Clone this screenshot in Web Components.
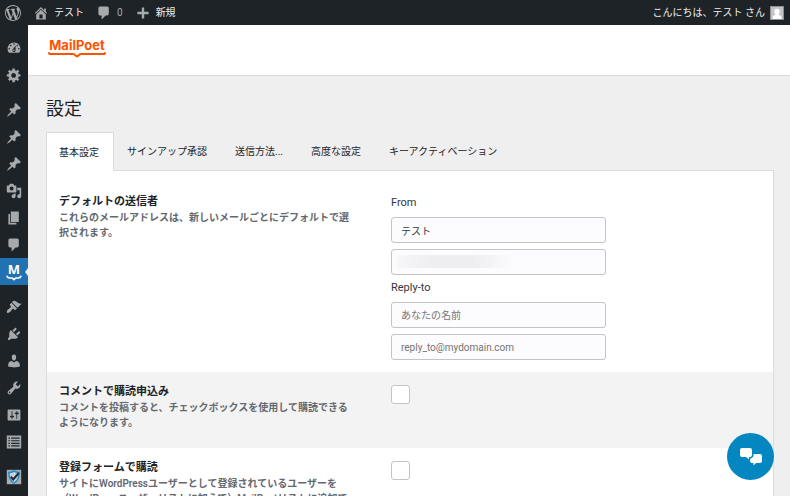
<!DOCTYPE html>
<html lang="ja">
<head>
<meta charset="utf-8">
<title>設定 - MailPoet</title>
<style>
  body {
    margin: 0;
    font-family: Roboto, "Noto Sans CJK JP", sans-serif;
    font-size: 10px;
    line-height: 15px;
    color: #1d2327;
  }
</style>
</head>
<body>
<settings-app></settings-app>

<script>
const ICONS = {
  wordpress: '<path d="M20 10c0-5.51-4.49-10-10-10C4.48 0 0 4.49 0 10c0 5.52 4.48 10 10 10 5.51 0 10-4.48 10-10zM7.78 15.37L4.37 6.22c.55-.02 1.17-.08 1.17-.08.5-.06.44-1.13-.06-1.11 0 0-1.45.11-2.37.11-.18 0-.37 0-.58-.01C4.12 2.69 6.87 1.11 10 1.11c2.33 0 4.45.87 6.05 2.34-.68-.11-1.65.39-1.65 1.58 0 .74.45 1.36.9 2.1.35.61.55 1.36.55 2.46 0 1.49-1.4 5-1.4 5l-3.03-8.37c.54-.02.82-.17.82-.17.5-.05.44-1.25-.06-1.22 0 0-1.44.12-2.38.12-.87 0-2.33-.12-2.33-.12-.5-.03-.56 1.2-.06 1.22l.92.08 1.26 3.41zM17.41 10c.24-.64.74-1.87.43-4.25.7 1.29 1.05 2.71 1.05 4.25 0 3.29-1.73 6.24-4.4 7.78.97-2.59 1.94-5.2 2.92-7.78zM6.1 18.09C3.12 16.65 1.11 13.53 1.11 10c0-1.3.23-2.48.72-3.59C3.25 10.3 4.67 14.2 6.1 18.09zm4.03-6.63l2.58 6.98c-.86.29-1.76.45-2.71.45-.79 0-1.57-.11-2.29-.33.81-2.38 1.62-4.74 2.42-7.1z"/>',
  home: '<path d="M16 8.5l1.53 1.53-1.06 1.06L10 4.6l-6.47 6.49-1.06-1.06L10 2.5l4 4v-2h2v4zm-6-2.46l6 5.99V18H4v-5.97zM12 17v-5H8v5h4z"/>',
  comments: '<path d="M5 2h9c1.1 0 2 .9 2 2v7c0 1.1-.9 2-2 2h-2l-5 5v-5H5c-1.1 0-2-.9-2-2V4c0-1.1.9-2 2-2z"/>',
  plus: '<path d="M17 8.5v3h-5.5V17h-3v-5.500H3v-3h5.500V3h3v5.500z"/>',
  dashboard: '<path fill-rule="evenodd" d="M3.76 16h12.48c1.1-1.37 1.76-3.11 1.76-5 0-4.42-3.58-8-8-8s-8 3.58-8 8c0 1.89.66 3.63 1.76 5zM10 4c.55 0 1 .45 1 1s-.45 1-1 1-1-.45-1-1 .45-1 1-1zM6 6c.55 0 1 .45 1 1s-.45 1-1 1-1-.45-1-1 .45-1 1-1zm8 0c.55 0 1 .45 1 1s-.45 1-1 1-1-.45-1-1 .45-1 1-1zm-5.370 5.550L12 7v6c0 1.100-.9 2-2 2s-2-.9-2-2c0-.57.24-1.080.63-1.450zM4 10c.55 0 1 .45 1 1s-.45 1-1 1-1-.45-1-1 .45-1 1-1zm12 0c.55 0 1 .45 1 1s-.45 1-1 1-1-.45-1-1 .45-1 1-1zm-5 3c0-.55-.45-1-1-1s-1 .45-1 1 .45 1 1 1 1-.45 1-1z"/>',
  gear: '<path fill-rule="evenodd" d="M18 12h-2.180c-.17.7-.44 1.350-.81 1.930l1.540 1.540-2.100 2.100-1.540-1.540c-.58.36-1.230.63-1.910.79V19H8v-2.180c-.68-.16-1.330-.43-1.910-.79l-1.540 1.540-2.120-2.120 1.540-1.540c-.36-.58-.63-1.230-.79-1.910H1V9.030h2.170c.16-.7.44-1.350.8-1.940L2.430 5.550l2.100-2.100 1.540 1.540c.58-.37 1.240-.64 1.930-.81V2h3v2.180c.68.16 1.330.43 1.910.79l1.540-1.540 2.120 2.120-1.540 1.540c.36.59.64 1.240.8 1.940H18V12zm-8.500 1.500c1.660 0 3-1.340 3-3s-1.340-3-3-3-3 1.340-3 3 1.340 3 3 3z"/>',
  pin: '<path d="M10.440 3.020l1.820-1.820 6.360 6.350-1.830 1.820c-1.050-.68-2.480-.57-3.410.36l-.75.75c-.92.93-1.040 2.350-.35 3.410l-1.830 1.820-2.410-2.410-2.800 2.790c-.42.42-3.380 2.710-3.800 2.290s1.860-3.390 2.280-3.810l2.790-2.790L4.100 9.360l1.830-1.820c1.050.69 2.480.57 3.400-.36l.75-.75c.93-.92 1.050-2.350.36-3.410z"/>',
  media: '<path fill-rule="evenodd" d="M13 11V4c0-.55-.45-1-1-1h-1.670L9 1H5L3.670 3H2c-.55 0-1 .45-1 1v7c0 .55.45 1 1 1h10c.55 0 1-.45 1-1zM7 4.500c1.380 0 2.500 1.120 2.500 2.500S8.380 9.500 7 9.500 4.500 8.380 4.500 7 5.620 4.500 7 4.500z"/><path d="M14 6h5v10.500c0 1.380-1.120 2.500-2.500 2.500S14 17.880 14 16.500s1.120-2.500 2.500-2.500c.17 0 .34.02.5.05V9h-3V6zm-4 8.050V13h2v3.500c0 1.380-1.120 2.500-2.500 2.500S7 17.880 7 16.500 8.120 14 9.500 14c.17 0 .34.02.5.05z"/>',
  page: '<path d="M6 15V2h10v13H6zm-1 1h8v2H3V5h2v11z"/>',
  brush: '<path d="M14.480 11.060L7.410 3.990l1.500-1.500c.5-.56 2.300-.47 3.510.32 1.210.8 1.430 1.280 2.910 2.100 1.180.64 2.450 1.260 4.450.85zm-.71.71L6.700 4.700 4.930 6.470c-.39.39-.39 1.020 0 1.410l1.060 1.060c.39.39.39 1.030 0 1.420-.6.6-1.430 1.110-2.210 1.690-.35.26-.7.53-1.010.84C1.430 14.230.4 16.080 1.400 17.070c.99 1 2.840-.03 4.180-1.360.31-.31.58-.66.85-1.020.57-.78 1.080-1.610 1.690-2.210.39-.39 1.020-.39 1.410 0l1.060 1.060c.39.39 1.020.39 1.410 0z"/>',
  plug: '<path d="M13.110 4.360L9.870 7.600 8 5.730l3.240-3.240c.35-.34 1.050-.2 1.560.32.52.51.66 1.210.31 1.550zm-8 1.770l.91-1.120 9.010 9.010-1.190.84c-.71.71-2.630 1.160-3.820 1.160H6.140L4.900 17.260c-.59.59-1.540.59-2.120 0-.59-.58-.59-1.530 0-2.120l1.240-1.240v-3.880c0-1.130.4-3.190 1.090-3.890zm7.260 3.970l3.240-3.240c.34-.35 1.040-.21 1.550.31.52.51.66 1.210.31 1.550l-3.240 3.250z"/>',
  user: '<path d="M10 9.250c-2.270 0-2.730-3.440-2.730-3.440C7 4.020 7.820 2 9.970 2c2.160 0 2.980 2.020 2.710 3.810 0 0-.41 3.440-2.680 3.440zm0 2.570L12.720 10c2.390 0 4.520 2.330 4.520 4.530v2.490s-3.650 1.130-7.240 1.130c-3.650 0-7.240-1.130-7.240-1.130v-2.490c0-2.250 1.940-4.480 4.470-4.480z"/>',
  wrench: '<path fill-rule="evenodd" d="M16.680 9.770c-1.340 1.340-3.300 1.670-4.950.99l-5.410 6.520c-.99.99-2.590.99-3.580 0s-.99-2.590 0-3.570l6.520-5.420c-.68-1.650-.35-3.610.99-4.950 1.280-1.280 3.120-1.620 4.720-1.060l-2.890 2.890 2.820 2.820 2.860-2.870c.53 1.580.18 3.390-1.080 4.650zM3.810 16.210c.4.39 1.040.39 1.430 0 .4-.4.4-1.040 0-1.430-.39-.4-1.030-.4-1.430 0-.39.39-.39 1.030 0 1.430z"/>',
  sliders: '<path fill-rule="evenodd" d="M18 16V4c0-.55-.45-1-1-1H3c-.55 0-1 .45-1 1v12c0 .55.45 1 1 1h14c.55 0 1-.45 1-1zM8 11h1c.55 0 1 .45 1 1s-.45 1-1 1H8v1.500c0 .28-.22.5-.5.5s-.5-.22-.5-.5V13H6c-.55 0-1-.45-1-1s.45-1 1-1h1V5.500c0-.28.22-.5.5-.5s.5.22.5.5V11zm5-2h-1c-.55 0-1-.45-1-1s.45-1 1-1h1V5.500c0-.28.22-.5.5-.5s.5.22.5.5V7h1c.55 0 1 .45 1 1s-.45 1-1 1h-1v5.500c0 .28-.22.5-.5.5s-.5-.22-.5-.5V9z"/>',
  list: '<path fill-rule="evenodd" d="M1 2h18v16H1zM3 4.500V6h2V4.500zM6.500 4.500V6H17V4.500zM3 7.700v1.500h2V7.700zM6.500 7.700v1.500H17V7.700zM3 11v1.500h2V11zM6.500 11v1.500H17V11zM3 14.200v1.500h2v-1.500zM6.500 14.200v1.500H17v-1.500z"/>',
  shield: '<path fill="#a9adb0" d="M1 1h18v18H1z"/><path fill="#c3d3df" stroke="#2d8ccb" stroke-width="2" d="M10 2.500c2 1.300 4 1.900 6.500 2 0 5.500-1 10-6.500 13.200-5.500-3.200-6.500-7.700-6.500-13.200 2.500-.1 4.500-.7 6.500-2z"/><path fill="none" stroke="#23282d" stroke-width="2.500" d="M6 9.500l3 3.500 7-8"/>',
  disc: '<circle cx="10" cy="10" r="8" fill="#b9a7a0"/>',
  brace: '<path fill="none" stroke="currentColor" stroke-width="2" stroke-linecap="round" stroke-linejoin="round" d="M1 1.500c1 2 2 2 3.500 2h2.500L9 5.500 11 3.500h2.500c1.500 0 2.500 0 3.500-2"/>',
  person: '<path fill="#c3c4c7" d="M0 0h20v20H0z"/><path fill="#fff" d="M10 3c2.800 0 4.500 2 4.500 4.500S13 12 12.500 12.700c2.500.8 5 2.300 5 5.800v1.500h-15v-1.500c0-3.500 2.500-5 5-5.800C7 12 5.500 10 5.500 7.500S7.200 3 10 3z"/>'
};

class WpIcon extends HTMLElement {
  constructor() {
    super();
    this.attachShadow({ mode: 'open' });
  }

  connectedCallback() {
    this.shadowRoot.innerHTML = `
      <style>
        :host {
          display: block;
          flex: none;
          width: 16px;
          height: 16px;
        }
        svg {
          display: block;
          width: 100%;
          height: 100%;
          fill: currentColor;
        }
      </style>
      <svg viewBox="${this.getAttribute('box') || '0 0 20 20'}" aria-hidden="true">${ICONS[this.getAttribute('name')]}</svg>
    `;
  }
}

class AdminBar extends HTMLElement {
  constructor() {
    super();
    this.attachShadow({ mode: 'open' }).innerHTML = `
      <style>
        :host {
          display: flex;
          align-items: center;
          justify-content: space-between;
          height: 25px;
          padding: 0 6px 0 5px;
          background: #1d2327;
          color: #f0f0f1;
        }
        nav {
          display: flex;
          align-items: center;
          gap: 12px;
        }
        a {
          display: flex;
          align-items: center;
          gap: 5px;
          color: inherit;
          text-decoration: none;
        }
        wp-icon {
          color: #a7aaad;
        }
        .count {
          color: #a7aaad;
        }
        .me wp-icon {
          border: 1px solid #8c8f94;
          width: 12px;
          height: 12px;
        }
      </style>
      <nav>
        <a href="#" aria-label="WordPress"><wp-icon name="wordpress"></wp-icon></a>
        <a href="#"><wp-icon name="home"></wp-icon>テスト</a>
        <a href="#" class="count"><wp-icon name="comments"></wp-icon>0</a>
        <a href="#"><wp-icon name="plus"></wp-icon>新規</a>
      </nav>
      <a href="#" class="me">こんにちは、テスト さん<wp-icon name="person"></wp-icon></a>
    `;
  }
}

class MenuItem extends HTMLElement {
  constructor() {
    super();
    this.attachShadow({ mode: 'open' }).innerHTML = `
      <style>
        :host {
          display: block;
          height: 27px;
          flex: none;
        }
        a {
          position: relative;
          display: flex;
          flex-direction: column;
          align-items: center;
          justify-content: center;
          height: 100%;
          color: #a7aaad;
          text-decoration: none;
        }
        :host([current]) a {
          background: #2271b1;
          color: #fff;
        }
        /* notch that points at the page */
        :host([current]) a::after {
          content: "";
          position: absolute;
          right: 0;
          border: 4px solid transparent;
          border-left-width: 0;
          border-right-width: 3px;
          border-right-color: #f0f0f1;
        }
      </style>
      <a href="#"><slot></slot></a>
    `;
  }

  connectedCallback() {
    this.shadowRoot.querySelector('a').setAttribute('aria-label', this.getAttribute('label'));
  }
}

class AdminMenu extends HTMLElement {
  constructor() {
    super();
    const item = (name, label) =>
      `<menu-item label="${label}"><wp-icon name="${name}"></wp-icon></menu-item>`;

    this.attachShadow({ mode: 'open' }).innerHTML = `
      <style>
        :host {
          display: block;
          background: #1d2327;
          overflow: hidden;
        }
        nav {
          display: flex;
          flex-direction: column;
          gap: 8px;
          padding-top: 9px;
        }
        .letter {
          font: 700 13px/12px "Open Sans", sans-serif;
        }
        .brace {
          width: 16px;
          height: 6px;
        }
      </style>
      <nav>
        <div>
          ${item('dashboard', 'ダッシュボード')}
          ${item('gear', '一般')}
        </div>
        <div>
          ${item('pin', '投稿')}
          ${item('pin', 'お知らせ')}
          ${item('pin', '事例')}
          ${item('media', 'メディア')}
          ${item('page', '固定ページ')}
          ${item('comments', 'コメント')}
          <menu-item label="MailPoet" current>
            <span class="letter">M</span>
            <wp-icon class="brace" name="brace" box="0 0 18 7"></wp-icon>
          </menu-item>
        </div>
        <div>
          ${item('brush', '外観')}
          ${item('plug', 'プラグイン')}
          ${item('user', 'ユーザー')}
          ${item('wrench', 'ツール')}
          ${item('sliders', '設定')}
          ${item('list', 'フィールド')}
        </div>
        <div>
          ${item('shield', 'セキュリティ')}
          ${item('disc', 'その他')}
        </div>
      </nav>
    `;
  }
}

class BrandHeader extends HTMLElement {
  constructor() {
    super();
    this.attachShadow({ mode: 'open' }).innerHTML = `
      <style>
        :host {
          display: flex;
          align-items: center;
          box-sizing: border-box;
          height: 51px;
          padding: 0 20px 4px;
          background: #fff;
          border-bottom: 1px solid #dcdcde;
        }
        a {
          display: flex;
          flex-direction: column;
          align-items: center;
          color: #fe5301;
          font: 700 13px/14px Inter, sans-serif;
          text-decoration: none;
        }
        svg {
          display: block;
          width: 58px;
          height: 6px;
        }
      </style>
      <a href="#">
        MailPoet
        <svg viewBox="0 0 58 6" aria-hidden="true">
          <path d="M1 1q0 1 2 1h22q1 0 2 1l2 1.500 2-1.500q1-1 2-1h22q2 0 2-1" fill="none" stroke="currentColor" stroke-width="2" stroke-linecap="round"/>
        </svg>
      </a>
    `;
  }
}

class TabBar extends HTMLElement {
  constructor() {
    super();
    this.attachShadow({ mode: 'open' }).innerHTML = `
      <style>
        :host {
          display: flex;
        }
        ::slotted(button) {
          height: 38px;
          margin: 0;
          padding: 0 14px 0 12px;
          border: 1px solid transparent;
          border-bottom: 0;
          background: none;
          color: #1d2327;
          font: inherit;
          white-space: nowrap;
        }
        /* the open tab covers the top line of the panel */
        ::slotted(button[aria-selected="true"]) {
          margin-bottom: -1px;
          height: 39px;
          border-color: #dcdcde;
          background: #fff;
        }
      </style>
      <slot></slot>
    `;
    this.setAttribute('role', 'tablist');
  }
}

class SettingRow extends HTMLElement {
  constructor() {
    super();
    this.attachShadow({ mode: 'open' }).innerHTML = `
      <style>
        :host {
          display: grid;
          grid-template-columns: minmax(0, 298px) minmax(0, 1fr);
          column-gap: 34px;
          padding: 12px 12px 18px;
        }
        :host([shaded]) {
          background: #f3f3f3;
        }
        :host([first]) {
          padding-top: 23px;
          padding-bottom: 12px;
        }
        ::slotted(.title) {
          display: block;
          margin-bottom: 1px;
          font-size: 11px;
          font-weight: 700;
        }
        ::slotted(p) {
          margin: 0;
          color: #646970;
          font-weight: 600;
        }
      </style>
      <div><slot></slot></div>
      <div><slot name="control"></slot></div>
    `;
  }
}

class SenderField extends HTMLElement {
  constructor() {
    super();
    this.attachShadow({ mode: 'open' });
  }

  connectedCallback() {
    const label = this.getAttribute('label');
    this.shadowRoot.innerHTML = `
      <style>
        :host {
          display: flex;
          flex-direction: column;
          gap: 6px;
          max-width: 215px;
        }
        :host(:not(:first-of-type)) {
          margin-top: 4px;
        }
        label {
          font-size: 11px;
          line-height: 17px;
          color: #32373c;
        }
        .box {
          display: flex;
          position: relative;
        }
        input {
          box-sizing: border-box;
          width: 100%;
          height: 26px;
          padding: 0 9px;
          border: 1px solid #c3c4c7;
          border-radius: 3px;
          background: #fcfcfe;
          color: #32373c;
          font: inherit;
          line-height: 15px;
        }
        input::placeholder {
          color: #757575;
          opacity: 1;
        }
        /* smudge over the hidden address */
        .masked::after {
          content: "";
          position: absolute;
          top: 6px;
          bottom: 7px;
          left: 6px;
          width: 118px;
          background: linear-gradient(90deg, #f7f7f9, #eeeef0 30%, #eeeef0 65%, #fcfcfe);
          pointer-events: none;
        }
      </style>
      <label for="name">${label}</label>
      <div class="box">
        <input id="name" type="text" value="${this.getAttribute('name-value') || ''}" placeholder="${this.getAttribute('name-hint') || ''}">
      </div>
      <div class="box ${this.hasAttribute('masked') ? 'masked' : ''}">
        <input type="email" aria-label="${label} メールアドレス" placeholder="${this.getAttribute('email-hint') || ''}">
      </div>
    `;
  }
}

class ChatButton extends HTMLElement {
  constructor() {
    super();
    this.attachShadow({ mode: 'open' }).innerHTML = `
      <style>
        :host {
          position: fixed;
          right: 16px;
          bottom: 16px;
        }
        button {
          display: grid;
          place-items: center;
          width: 47px;
          height: 47px;
          padding: 0;
          border: 0;
          border-radius: 50%;
          background: #0487c0;
        }
        svg {
          display: block;
          width: 24px;
          height: 20px;
          fill: #fff;
        }
      </style>
      <button type="button" aria-label="チャット">
        <svg viewBox="0 0 24 20">
          <path d="M3 1h8q2 0 2 2v5q0 2-2 2h-1v2.500L7 10H3q-2 0-2-2V3q0-2 2-2z"/>
          <path d="M14.500 7H21q2 0 2 2v5q0 2-2 2h-4l-2.500 2.500V16H13q-2 0-2-2v-.5l.500-2.200q3-.3 3-3.300z"/>
        </svg>
      </button>
    `;
  }
}

class SettingsApp extends HTMLElement {
  constructor() {
    super();
    this.attachShadow({ mode: 'open' }).innerHTML = `
      <style>
        :host {
          display: grid;
          grid-template: auto minmax(0, 1fr) / 28px minmax(0, 1fr);
          height: 100vh;
          overflow: hidden;
          background: #f0f0f1;
        }
        admin-bar {
          grid-column: 1 / -1;
        }
        main {
          overflow: hidden;
          background: #efefef;
        }
        .content {
          padding: 20px 16px 20px 18px;
        }
        h1 {
          margin: 0 0 10px;
          font-size: 18px;
          line-height: 26px;
          font-weight: 400;
        }
        .panel {
          border: 1px solid #dcdcde;
          background: #fff;
        }
        input[type="checkbox"] {
          appearance: none;
          display: block;
          box-sizing: border-box;
          width: 19px;
          height: 19px;
          margin: 1px 0 0;
          border: 1px solid #c3c4c7;
          border-radius: 3px;
          background: #fff;
        }
      </style>
      <admin-bar></admin-bar>
      <admin-menu></admin-menu>
      <main>
        <brand-header></brand-header>
        <div class="content">
          <h1>設定</h1>
          <tab-bar>
            <button type="button" role="tab" aria-selected="true">基本設定</button>
            <button type="button" role="tab">サインアップ承認</button>
            <button type="button" role="tab">送信方法...</button>
            <button type="button" role="tab">高度な設定</button>
            <button type="button" role="tab">キーアクティベーション</button>
          </tab-bar>
          <form class="panel">
            <setting-row first>
              <span class="title">デフォルトの送信者</span>
              <p>これらのメールアドレスは、新しいメールごとにデフォルトで選択されます。</p>
              <sender-field slot="control" label="From" name-value="テスト" masked></sender-field>
              <sender-field slot="control" label="Reply-to" name-hint="あなたの名前" email-hint="reply_to@mydomain.com"></sender-field>
            </setting-row>
            <setting-row shaded>
              <label class="title" for="on-comment">コメントで購読申込み</label>
              <p>コメントを投稿すると、チェックボックスを使用して購読できるようになります。</p>
              <input slot="control" id="on-comment" type="checkbox">
            </setting-row>
            <setting-row>
              <label class="title" for="on-register">登録フォームで購読</label>
              <p>サイトにWordPressユーザーとして登録されているユーザーを（WordPressユーザーリストに加えて）MailPoetリストに追加できるようになります。</p>
              <input slot="control" id="on-register" type="checkbox">
            </setting-row>
          </form>
        </div>
      </main>
      <chat-button></chat-button>
    `;
  }
}

customElements.define('wp-icon', WpIcon);
customElements.define('admin-bar', AdminBar);
customElements.define('menu-item', MenuItem);
customElements.define('admin-menu', AdminMenu);
customElements.define('brand-header', BrandHeader);
customElements.define('tab-bar', TabBar);
customElements.define('setting-row', SettingRow);
customElements.define('sender-field', SenderField);
customElements.define('chat-button', ChatButton);
customElements.define('settings-app', SettingsApp);
</script>
</body>
</html>
